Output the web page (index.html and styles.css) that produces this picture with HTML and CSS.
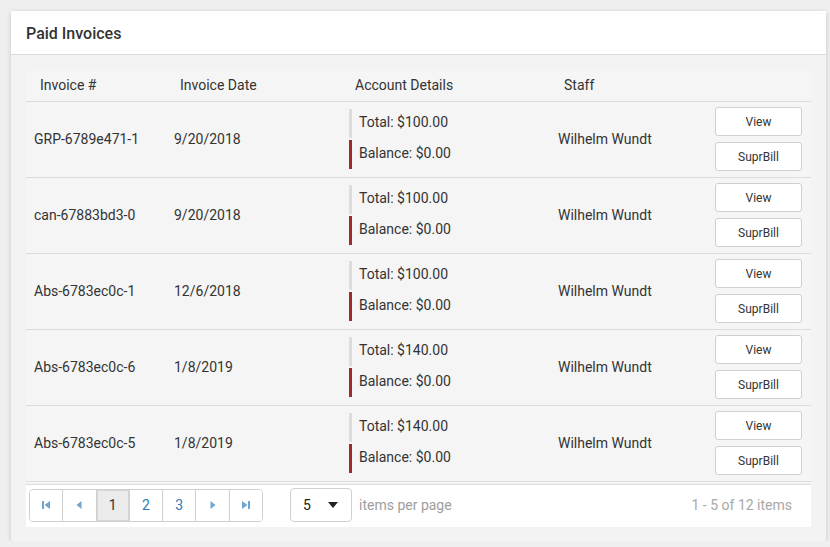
FILE: index.html
```html
<!DOCTYPE html>
<html lang="en">

<head>
    <meta charset="UTF-8">
    <meta name="viewport" content="width=device-width, initial-scale=1.0">
    <title>Paid Invoices</title>
    <link rel="stylesheet" href="styles.css">
</head>

<body>
    <div class="card">
        <div class="card-header">Paid Invoices</div>
        <div class="card-body">
            <div class="grid">
                <table class="grid-table">
                    <colgroup>
                        <col style="width: 140px">
                        <col style="width: 175px">
                        <col style="width: 209px">
                        <col style="width: 157px">
                        <col>
                    </colgroup>
                    <thead>
                        <tr>
                            <th>Invoice #</th>
                            <th>Invoice Date</th>
                            <th>Account Details</th>
                            <th>Staff</th>
                            <th></th>
                        </tr>
                    </thead>
                    <tbody>
                        <tr>
                            <td>GRP-6789e471-1</td>
                            <td>9/20/2018</td>
                            <td>
                                <div class="amount total">Total: $100.00</div>
                                <div class="amount balance">Balance: $0.00</div>
                            </td>
                            <td>Wilhelm Wundt</td>
                            <td>
                                <button class="row-button">View</button>
                                <button class="row-button">SuprBill</button>
                            </td>
                        </tr>
                        <tr>
                            <td>can-67883bd3-0</td>
                            <td>9/20/2018</td>
                            <td>
                                <div class="amount total">Total: $100.00</div>
                                <div class="amount balance">Balance: $0.00</div>
                            </td>
                            <td>Wilhelm Wundt</td>
                            <td>
                                <button class="row-button">View</button>
                                <button class="row-button">SuprBill</button>
                            </td>
                        </tr>
                        <tr>
                            <td>Abs-6783ec0c-1</td>
                            <td>12/6/2018</td>
                            <td>
                                <div class="amount total">Total: $100.00</div>
                                <div class="amount balance">Balance: $0.00</div>
                            </td>
                            <td>Wilhelm Wundt</td>
                            <td>
                                <button class="row-button">View</button>
                                <button class="row-button">SuprBill</button>
                            </td>
                        </tr>
                        <tr>
                            <td>Abs-6783ec0c-6</td>
                            <td>1/8/2019</td>
                            <td>
                                <div class="amount total">Total: $140.00</div>
                                <div class="amount balance">Balance: $0.00</div>
                            </td>
                            <td>Wilhelm Wundt</td>
                            <td>
                                <button class="row-button">View</button>
                                <button class="row-button">SuprBill</button>
                            </td>
                        </tr>
                        <tr>
                            <td>Abs-6783ec0c-5</td>
                            <td>1/8/2019</td>
                            <td>
                                <div class="amount total">Total: $140.00</div>
                                <div class="amount balance">Balance: $0.00</div>
                            </td>
                            <td>Wilhelm Wundt</td>
                            <td>
                                <button class="row-button">View</button>
                                <button class="row-button">SuprBill</button>
                            </td>
                        </tr>
                    </tbody>
                </table>

                <!-- pager -->
                <div class="pager">
                    <div class="pager-numbers">
                        <button class="pager-btn arrow">
                            <svg width="10" height="10" viewBox="0 0 10 10"><rect x="1" y="1" width="2" height="8" fill="currentColor"/><polygon points="9,1 9,9 3.5,5" fill="currentColor"/></svg>
                        </button>
                        <button class="pager-btn arrow">
                            <svg width="10" height="10" viewBox="0 0 10 10"><polygon points="7.5,1 7.5,9 2.5,5" fill="currentColor"/></svg>
                        </button>
                        <button class="pager-btn active">1</button>
                        <button class="pager-btn">2</button>
                        <button class="pager-btn">3</button>
                        <button class="pager-btn arrow">
                            <svg width="10" height="10" viewBox="0 0 10 10"><polygon points="2.5,1 2.5,9 7.5,5" fill="currentColor"/></svg>
                        </button>
                        <button class="pager-btn arrow">
                            <svg width="10" height="10" viewBox="0 0 10 10"><polygon points="1,1 1,9 6.5,5" fill="currentColor"/><rect x="7" y="1" width="2" height="8" fill="currentColor"/></svg>
                        </button>
                    </div>
                    <div class="pager-size">
                        <span>5</span>
                        <svg width="10" height="8" viewBox="0 0 10 8"><polygon points="0,1 10,1 5,7" fill="#222"/></svg>
                    </div>
                    <span class="pager-label">items per page</span>
                    <span class="pager-info">1 - 5 of 12 items</span>
                </div>
            </div>
        </div>
    </div>
</body>

</html>
```

FILE: styles.css
```css
body {
    margin: 0;
    background-color: #efefef;
    font-family: Roboto, "Liberation Sans", sans-serif;
    font-size: 14px;
    color: #333;
}

.card {
    width: 815px;
    margin: 11px 0 0 11px;
    background-color: #f3f3f3;
    box-shadow: 0 1px 5px rgba(0, 0, 0, 0.18);
    border-radius: 2px;
}

.card-header {
    height: 43px;
    line-height: 45px;
    padding-left: 15px;
    background-color: white;
    border-bottom: 1px solid #dcdcdc;
    font-size: 16px;
    font-weight: 500;
    color: #333;
}

.card-body {
    padding: 15px 15px 14px 15px;
}

.grid {
    background-color: #f5f5f5;
}

.grid-table {
    width: 100%;
    border-collapse: collapse;
    table-layout: fixed;
}

.grid-table th {
    height: 30px;
    padding: 0 14px 1px 14px;
    text-align: left;
    font-weight: 400;
    color: #333;
    border-bottom: 1px solid #dcdcdc;
}

.grid-table td {
    height: 74px;
    padding: 0 8px 1px 8px;
    border-bottom: 1px solid #dcdcdc;
    vertical-align: middle;
    white-space: nowrap;
}

.amount {
    height: 29px;
    line-height: 27px;
    padding-left: 7px;
    border-left: 3px solid #dcdcdc;
}

.amount.total {
    margin-bottom: 2px;
}

.amount.balance {
    border-left-color: #9e2a2b;
}

.row-button {
    display: block;
    width: 87px;
    height: 29px;
    background-color: white;
    border: 1px solid #d0d0d0;
    border-radius: 3px;
    font-family: Roboto, "Liberation Sans", sans-serif;
    font-size: 12px;
    color: #333;
    padding: 0;
}

.row-button + .row-button {
    margin-top: 6px;
}

/* pager */
.pager {
    display: flex;
    align-items: center;
    margin-top: 2px;
    height: 43px;
    box-sizing: border-box;
    padding: 0 19px 2px 3px;
    background-color: white;
    border-top: 1px solid #dcdcdc;
}

.pager-numbers {
    display: flex;
    width: 234px;
    box-sizing: border-box;
    border: 1px solid #d0d0d0;
    border-radius: 4px;
    overflow: hidden;
}

.pager-btn {
    flex: 1;
    height: 31px;
    padding: 0;
    background-color: white;
    border: none;
    border-left: 1px solid #d0d0d0;
    font-family: Roboto, "Liberation Sans", sans-serif;
    font-size: 14px;
    color: #2f7bb3;
    display: flex;
    align-items: center;
    justify-content: center;
}

.pager-btn:first-child {
    border-left: none;
}

.pager-btn.arrow {
    color: #6ea6cf;
}

.pager-btn.active {
    background-color: #ebebeb;
    color: #333;
    box-shadow: inset 0 0 0 1px #d6d6d6;
}

.pager-size {
    display: flex;
    align-items: center;
    justify-content: space-between;
    width: 62px;
    height: 34px;
    box-sizing: border-box;
    margin-left: 27px;
    padding: 0 13px 0 12px;
    border: 1px solid #d0d0d0;
    border-radius: 4px;
    color: #222;
}

.pager-label {
    margin-left: 7px;
    color: #9e9e9e;
}

.pager-info {
    margin-left: auto;
    color: #a8a8a8;
}
```
